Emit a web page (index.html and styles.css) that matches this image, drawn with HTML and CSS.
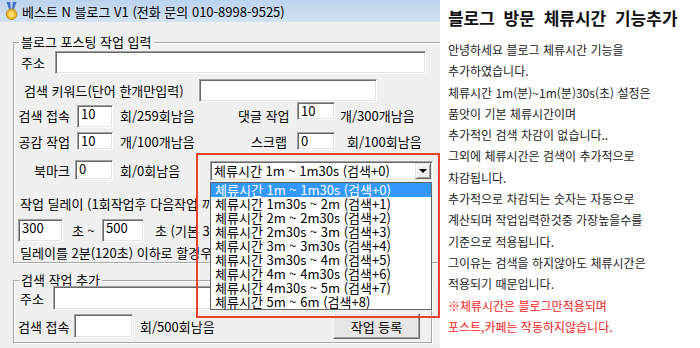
FILE: index.html
```html
<!DOCTYPE html>
<html lang="ko">
<head>
    <meta charset="UTF-8">
    <title>베스트 N 블로그 V1</title>
    <link rel="stylesheet" href="styles.css">
</head>
<body>
    <div class="app">
        <div class="titlebar">
            <svg class="medal" width="13" height="18" viewBox="0 0 13 18">
                <path d="M1.5 0h10l-3 8.5h-4z" fill="#3d6cc0"/>
                <path d="M5 0h3l-0.9 8.5h-1.2z" fill="#a9c8ee"/>
                <circle cx="6.5" cy="12.2" r="5.3" fill="#eab42a" stroke="#b98318" stroke-width="0.8"/>
                <circle cx="6.5" cy="12.2" r="3" fill="#ffdc6e"/>
            </svg>
            <span>베스트 N 블로그 V1 (전화 문의 010-8998-9525)</span>
        </div>

        <!-- 블로그 포스팅 -->
        <fieldset class="group group-post">
            <legend>블로그 포스팅 작업 입력</legend>
            <div class="row row-addr">
                <span class="lbl lbl-addr">주소</span>
                <div class="tb tb-addr"></div>
            </div>
            <div class="row row-kw">
                <span class="lbl lbl-kw">검색 키워드(단어 한개만입력)</span>
                <div class="tb tb-kw"></div>
            </div>
            <div class="row row-count">
                <span class="lbl lbl-r">검색 접속</span>
                <div class="tb tb-n1 tb-bottom">10</div>
                <span class="unit">회/259회남음</span>
                <span class="lbl lbl-r2">댓글 작업</span>
                <div class="tb tb-n2 tb-top">10</div>
                <span class="unit unit-r">개/300개남음</span>
            </div>
            <div class="row row-like">
                <span class="lbl lbl-r">공감 작업</span>
                <div class="tb tb-n1">10</div>
                <span class="unit">개/100개남음</span>
                <span class="lbl lbl-r2 lbl-scrap">스크랩</span>
                <div class="tb tb-n2">0</div>
                <span class="unit unit-r2">회/100회남음</span>
            </div>
            <div class="row row-mark">
                <span class="lbl lbl-r lbl-mark">북마크</span>
                <div class="tb tb-n3">0</div>
                <span class="unit unit-mark">회/0회남음</span>
                <div class="combo">
                    <span class="combo-text">체류시간 1m ~ 1m30s (검색+0)</span>
                    <span class="combo-btn"></span>
                    <ul class="droplist">
                        <li class="sel">체류시간 1m ~ 1m30s (검색+0)</li>
                        <li>체류시간 1m30s ~ 2m (검색+1)</li>
                        <li>체류시간 2m ~ 2m30s (검색+2)</li>
                        <li>체류시간 2m30s ~ 3m (검색+3)</li>
                        <li>체류시간 3m ~ 3m30s (검색+4)</li>
                        <li>체류시간 3m30s ~ 4m (검색+5)</li>
                        <li>체류시간 4m ~ 4m30s (검색+6)</li>
                        <li>체류시간 4m30s ~ 5m (검색+7)</li>
                        <li>체류시간 5m ~ 6m (검색+8)</li>
                    </ul>
                </div>
            </div>
            <div class="row row-text row-delay-title">작업 딜레이 (1회작업후 다음작업 까지 대기시간)</div>
            <div class="row row-delay">
                <div class="tb tb-d1">300</div>
                <span class="sec">초 ~</span>
                <div class="tb tb-d2">500</div>
                <span class="sec2">초 (기본 300초 ~ 500초)</span>
            </div>
            <div class="row row-text row-note">딜레이를 2분(120초) 이하로 할경우 위험합니다</div>
        </fieldset>

        <!-- 검색 작업 -->
        <fieldset class="group group-search">
            <legend>검색 작업 추가</legend>
            <div class="row row-addr2">
                <span class="lbl lbl-addr2">주소</span>
                <div class="tb tb-addr2"></div>
            </div>
            <div class="row row-search">
                <span class="lbl lbl-search">검색 접속</span>
                <div class="tb tb-s1"></div>
                <span class="unit">회/500회남음</span>
                <button class="btn">작업 등록</button>
            </div>
        </fieldset>

        <div class="highlight"></div>
    </div>

    <div class="notes">
        <h1>블로그 방문 체류시간 기능추가</h1>
        <p>
            안녕하세요 블로그 체류시간 기능을<br>
            추가하였습니다.<br>
            체류시간 1m(분)~1m(분)30s(초) 설정은<br>
            품앗이 기본 체류시간이며<br>
            추가적인 검색 차감이 없습니다..<br>
            그외에 체류시간은 검색이 추가적으로<br>
            차감됩니다.<br>
            추가적으로 차감되는 숫자는 자동으로<br>
            계산되며 작업입력한것중 가장높을수를<br>
            기준으로 적용됩니다.<br>
            그이유는 검색을 하지않아도 체류시간은<br>
            적용되기 때문입니다.<br>
            <span class="warn">※체류시간은 블로그만적용되며<br>
            포스트,카페는 작동하지않습니다.</span>
        </p>
    </div>
</body>
</html>
```

FILE: styles.css
```css
body {
    margin: 0;
    width: 700px;
    height: 348px;
    overflow: hidden;
    display: flex;
    font-family: "Noto Sans CJK KR", sans-serif;
    font-size: 13px;
    color: #000;
}
.app {
    position: relative;
    width: 445px;
    height: 348px;
    background: #f0f0f0;
    overflow: hidden;
}
.titlebar {
    height: 22px;
    display: flex;
    align-items: center;
    gap: 4px;
    padding-left: 5px;
    background: linear-gradient(to bottom, #bdd3ee, #d3e2f3);
    white-space: nowrap;
}
.medal {
    display: block;
}

/* group boxes */
.group {
    box-sizing: border-box;
    margin: 0 0 0 13px;
    padding: 0 0 2px 0;
    min-width: 0;
    border: 1px solid #a8a8a8;
    box-shadow: inset 1px 1px 0 #fff, 1px 1px 0 #fff;
}
.group legend {
    margin-left: 5px;
    padding: 0 2px;
    line-height: 12px;
    white-space: nowrap;
}
.group-post {
    width: 428px;
    margin-top: 14px;
}
.group-search {
    width: 419px;
    margin-top: 11px;
    padding-bottom: 3px;
}

.row {
    display: flex;
    align-items: center;
    white-space: nowrap;
}
.lbl {
    display: block;
    flex: none;
}
.unit {
    flex: none;
    margin-left: 7px;
}

/* text boxes */
.tb {
    box-sizing: border-box;
    flex: none;
    background: #fff;
    border-top: 1px solid #a0a0a0;
    border-left: 1px solid #a0a0a0;
    border-right: 1px solid #fff;
    border-bottom: 1px solid #fff;
    box-shadow: inset 1px 1px 0 #696969, inset -1px -1px 0 #e3e3e3;
    padding: 0 3px;
    line-height: 16px;
}

.row-addr {
    margin-top: 3px;
    height: 23px;
    padding-left: 7px;
}
.lbl-addr { width: 34px; }
.tb-addr { width: 371px; height: 23px; }

.row-kw {
    margin-top: 5px;
    height: 23px;
    padding-left: 10px;
}
.lbl-kw { width: 175px; }
.tb-kw { width: 178px; height: 23px; }

.row-count {
    height: 26px;
    padding-left: 4px;
}
.row-like {
    margin-top: 4px;
    height: 18px;
    padding-left: 4px;
}
.row-mark {
    margin-top: 10px;
    height: 21px;
    padding-left: 4px;
}
.lbl-r {
    width: 59px;
    box-sizing: border-box;
    text-align: right;
    padding-right: 7px;
}
.lbl-mark {
    width: 57px;
    padding-right: 5px;
}
.lbl-r2 {
    width: 59px;
    box-sizing: border-box;
    text-align: right;
    padding-right: 8px;
}
.lbl-scrap {
    padding-right: 10px;
}
.tb-n1 { width: 36px; height: 18px; }
.tb-n2 { width: 38px; height: 18px; }
.tb-n3 { width: 38px; height: 20px; align-self: flex-start; }
.tb-bottom { height: 23px; align-self: flex-end; }
.tb-top { align-self: flex-start; }
.row-count .unit,
.row-like .unit {
    width: 118px;
}
.row-count .unit-r {
    width: auto;
    margin-left: 5px;
}
.row-like .unit-r2 {
    width: auto;
    margin-left: 12px;
}
.unit-mark {
    width: 90px;
}

/* combo box */
.combo {
    position: relative;
    box-sizing: border-box;
    width: 223px;
    height: 20px;
    align-self: flex-end;
    display: flex;
    align-items: center;
    background: #fff;
    border: 1px solid #a0a0a0;
    border-right-color: #fff;
    border-bottom-color: #fff;
    box-shadow: inset 1px 1px 0 #696969, inset -1px -1px 0 #e3e3e3;
    z-index: 2;
}
.combo-text {
    flex: 1;
    padding-left: 3px;
    line-height: 16px;
}
.combo-btn {
    position: relative;
    width: 16px;
    height: 16px;
    margin-right: 1px;
    box-sizing: border-box;
    background: #f0f0f0;
    border: 1px solid #e3e3e3;
    border-right-color: #696969;
    border-bottom-color: #696969;
    box-shadow: inset 1px 1px 0 #fff, inset -1px -1px 0 #a0a0a0;
}
.combo-btn::after {
    content: "";
    position: absolute;
    left: 3px;
    top: 5px;
    border-left: 4px solid transparent;
    border-right: 4px solid transparent;
    border-top: 4px solid #000;
}
.droplist {
    position: absolute;
    top: 20px;
    left: -1px;
    width: 222px;
    box-sizing: border-box;
    margin: 0;
    padding: 0;
    list-style: none;
    background: #fff;
    border: 1px solid #646464;
}
.droplist li {
    height: 14px;
    line-height: 14px;
    padding-left: 4px;
}
.droplist .sel {
    background: #3399ff;
    color: #fff;
}

/* delay rows (the part under the open list is cut off) */
.row-text {
    box-sizing: border-box;
    width: 196px;
    height: 16px;
    padding-left: 6px;
    overflow: hidden;
}
.row-delay-title {
    margin-top: 14px;
}
.row-delay {
    margin-top: 8px;
    height: 23px;
    padding-left: 4px;
}
.tb-d1 { width: 45px; height: 23px; }
.tb-d2 { width: 42px; height: 23px; }
.sec {
    width: 30px;
    margin-left: 9px;
}
.sec2 {
    width: 55px;
    margin-left: 11px;
    overflow: hidden;
}
.row-note {
    margin-top: 2px;
}

/* search group */
.row-addr2 {
    height: 24px;
    padding-left: 6px;
}
.lbl-addr2 { width: 33px; }
.tb-addr2 { width: 373px; height: 24px; }
.row-search {
    margin-top: 3px;
    height: 26px;
    padding-left: 4px;
}
.lbl-search { width: 56px; }
.tb-s1 { width: 59px; height: 24px; }
.btn {
    margin-left: auto;
    margin-right: 11px;
    width: 87px;
    height: 26px;
    padding: 0;
    font-family: inherit;
    font-size: 13px;
    background: #e6e6e6;
    border: 1px solid #fff;
    border-right-color: #696969;
    border-bottom-color: #696969;
    box-shadow: inset -1px -1px 0 #a0a0a0;
}

.highlight {
    position: absolute;
    left: 196px;
    top: 153px;
    width: 244px;
    height: 165px;
    box-sizing: border-box;
    border: 2px solid #ee4133;
    z-index: 3;
}

/* notes panel */
.notes {
    width: 255px;
    background: #fff;
    padding: 8px 0 0 8px;
    color: #1c1c1c;
    white-space: nowrap;
}
.notes h1 {
    margin: 0;
    font-size: 17px;
    line-height: 20px;
    font-weight: bold;
    word-spacing: 4px;
    color: #111;
}
.notes p {
    margin: 11px 0 0 0;
    font-size: 12px;
    line-height: 21.3px;
}
.warn {
    color: #ff1a1a;
}
```
